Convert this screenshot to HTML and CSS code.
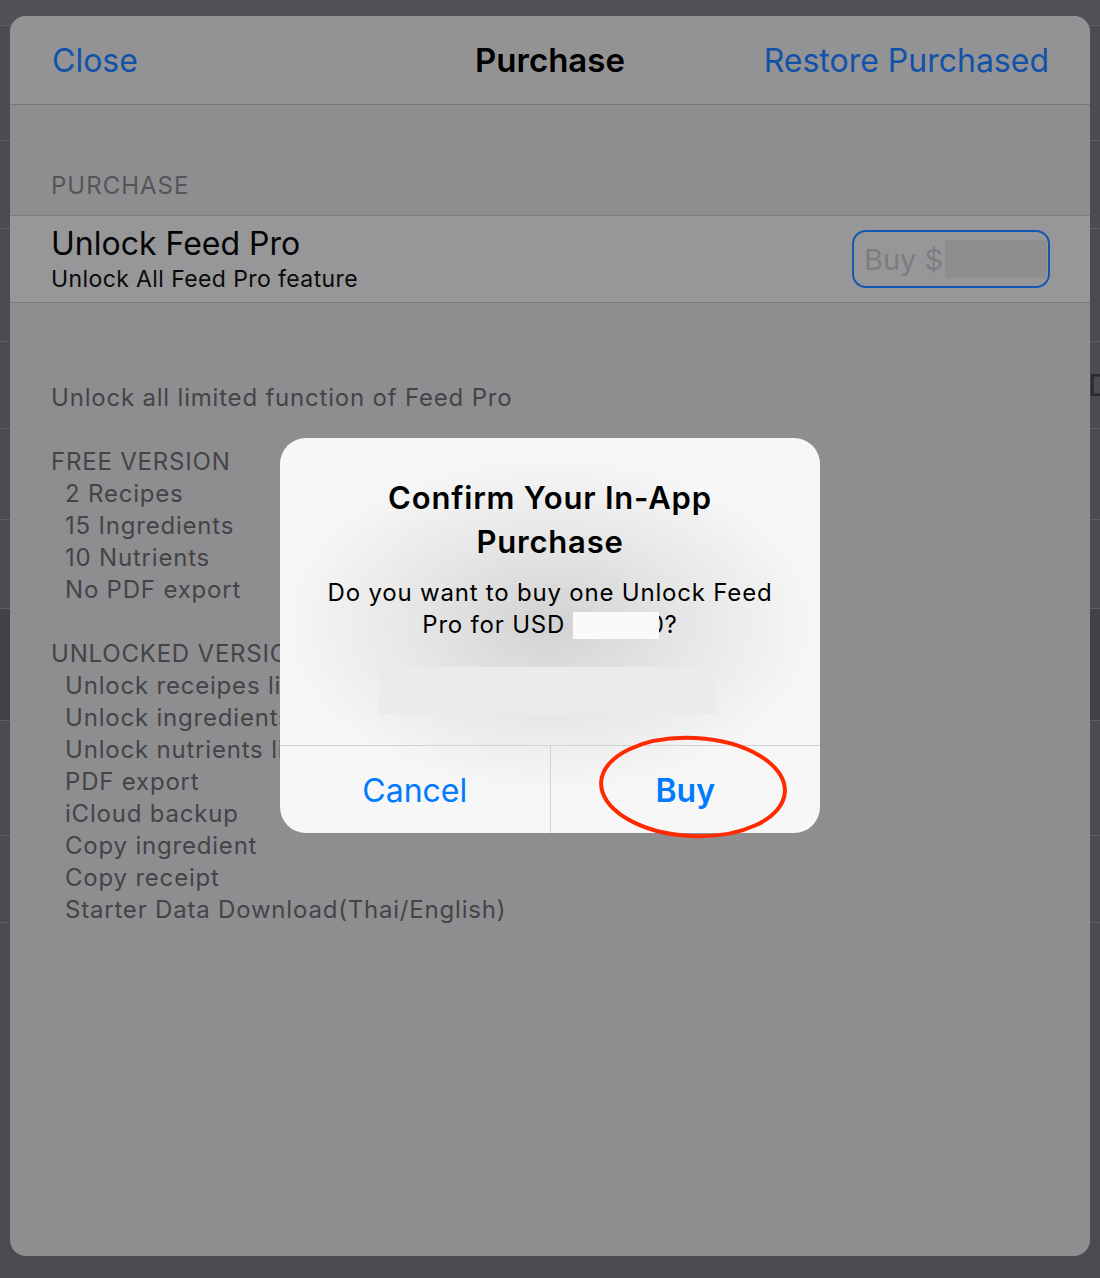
FILE: index.html
```html
<!DOCTYPE html>
<html lang="en">
<head>
    <meta charset="UTF-8">
    <meta name="viewport" content="width=device-width, initial-scale=1.0">
    <title>Purchase</title>
    <link rel="stylesheet" href="styles.css">
</head>
<body>
    <!-- list behind the sheet, only its edges show -->
    <div class="behind">
        <div class="brow nav"></div>
        <div class="brow" style="height:114px"></div>
        <div class="brow" style="height:87px"></div>
        <div class="brow" style="height:112px"></div>
        <div class="brow" style="height:86px"><span class="peek">D</span></div>
        <div class="brow" style="height:90px"></div>
        <div class="brow" style="height:88px"></div>
        <div class="brow dark" style="height:111px"></div>
        <div class="brow" style="height:114px"></div>
        <div class="brow" style="height:86px"><span class="peek">(</span></div>
    </div>

    <div class="sheet">
        <header class="sheet-head">
            <span class="link">Close</span>
            <span class="title">Purchase</span>
            <span class="link">Restore Purchased</span>
        </header>

        <div class="section-title">PURCHASE</div>
        <div class="cell">
            <div>
                <div class="cell-title">Unlock Feed Pro</div>
                <div class="cell-sub">Unlock All Feed Pro feature</div>
            </div>
            <div class="buy-btn">Buy $<span class="hidden-price"></span></div>
        </div>

        <div class="about">
            <div>Unlock all limited function of Feed Pro</div>
            <div class="blank"></div>
            <div>FREE VERSION</div>
            <div class="item">2 Recipes</div>
            <div class="item">15 Ingredients</div>
            <div class="item">10 Nutrients</div>
            <div class="item">No PDF export</div>
            <div class="blank"></div>
            <div>UNLOCKED VERSION</div>
            <div class="item">Unlock receipes limit</div>
            <div class="item">Unlock ingredients limit</div>
            <div class="item">Unlock nutrients limit</div>
            <div class="item">PDF export</div>
            <div class="item">iCloud backup</div>
            <div class="item">Copy ingredient</div>
            <div class="item">Copy receipt</div>
            <div class="item">Starter Data Download(Thai/English)</div>
        </div>
    </div>

    <div class="alert">
        <div class="alert-body">
            <div class="alert-title">Confirm Your In-App<br>Purchase</div>
            <div class="alert-msg">Do you want to buy one Unlock Feed<br>Pro for USD <span class="mask"></span>0?</div>
            <div class="alert-box"></div>
        </div>
        <div class="alert-actions">
            <div class="action">Cancel</div>
            <div class="action bold">Buy</div>
        </div>
        <svg class="circle" width="200" height="112" viewBox="0 0 200 112">
            <ellipse cx="100" cy="56" rx="92" ry="49" transform="rotate(3 100 56)" fill="none" stroke="#ff2a00" stroke-width="4"/>
        </svg>
    </div>
</body>
</html>
```

FILE: styles.css
```css
body {
    margin: 0;
    width: 1100px;
    height: 1278px;
    background-color: #4a4b4f;
    font-family: 'Inter', 'Roboto', sans-serif;
    position: relative;
    overflow: hidden;
}
.behind {
    display: flex;
    flex-direction: column;
}
.brow {
    border-bottom: 1px solid #5e5f63;
    background-color: #4b4c50;
    display: flex;
    justify-content: flex-end;
    align-items: center;
}
.brow.nav {
    height: 25px;
    background-color: #505155;
}
.brow.dark {
    background-color: #424346;
}
.peek {
    font-size: 30px;
    color: #2a2a2d;
    margin-right: -10px;
}
.sheet {
    position: absolute;
    top: 16px;
    left: 10px;
    width: 1080px;
    height: 1240px;
    border-radius: 16px;
    background-color: #8e8e91;
    overflow: hidden;
}
.sheet-head {
    height: 88px;
    display: flex;
    align-items: center;
    justify-content: space-between;
    padding: 0 41px 0 42px;
    background-color: #939395;
    border-bottom: 1px solid #77777a;
    position: relative;
}
.link {
    font-size: 32px;
    color: #1152a8;
}
.title {
    position: absolute;
    left: 0;
    right: 0;
    text-align: center;
    font-size: 33px;
    font-weight: 600;
    color: #000;
}
.section-title {
    padding: 65px 0 0 41px;
    height: 45px;
    font-size: 24px;
    line-height: 32px;
    letter-spacing: 1px;
    color: #555558;
}
.cell {
    height: 86px;
    display: flex;
    align-items: center;
    justify-content: space-between;
    padding: 0 40px 0 41px;
    background-color: #979799;
    border-top: 1px solid #7c7c7f;
    border-bottom: 1px solid #7c7c7f;
}
.cell-title {
    font-size: 32px;
    line-height: 40px;
    color: #050505;
}
.cell-sub {
    font-size: 23px;
    line-height: 30px;
    letter-spacing: 0.4px;
    color: #0a0a0a;
}
.buy-btn {
    width: 184px;
    height: 54px;
    border: 2px solid #1556b0;
    border-radius: 14px;
    display: flex;
    align-items: center;
    padding-left: 10px;
    font-size: 29px;
    color: #7d7d80;
}
.hidden-price {
    width: 102px;
    height: 38px;
    margin-left: 2px;
    background-color: #8e8e90;
}
.about {
    padding: 79px 0 0 41px;
    font-size: 24px;
    line-height: 32px;
    letter-spacing: 0.8px;
    color: #444447;
}
.blank {
    height: 32px;
}
.item {
    padding-left: 14px;
}
.alert {
    position: absolute;
    top: 438px;
    left: 280px;
    width: 540px;
    height: 395px;
    border-radius: 26px;
    background: radial-gradient(ellipse 270px 170px at 50% 47%, #d2d2d2 0%, #e6e6e6 50%, #f7f7f7 100%);
    display: flex;
    flex-direction: column;
}
.alert-body {
    flex: 1;
    display: flex;
    flex-direction: column;
    align-items: center;
    padding-top: 38px;
    text-align: center;
}
.alert-title {
    font-size: 31px;
    line-height: 44px;
    letter-spacing: 0.8px;
    font-weight: 600;
    color: #000;
}
.alert-msg {
    margin-top: 13px;
    font-size: 24px;
    line-height: 32px;
    letter-spacing: 0.8px;
    color: #000;
}
.mask {
    display: inline-block;
    position: relative;
    z-index: 1;
    width: 86px;
    height: 27px;
    margin-right: -10px;
    vertical-align: -6px;
    background-color: #fafafa;
}
.alert-box {
    margin-top: 26px;
    margin-left: -6px;
    width: 336px;
    height: 47px;
    background-color: #ebebeb;
}
.alert-actions {
    height: 87px;
    display: flex;
    border-top: 1px solid #d3d3d6;
}
.action {
    flex: 1;
    display: flex;
    align-items: center;
    justify-content: center;
    padding-top: 2px;
    font-size: 32px;
    color: #007aff;
}
.action + .action {
    border-left: 1px solid #d3d3d6;
}
.action.bold {
    font-weight: 600;
}
.circle {
    position: absolute;
    left: 313px;
    top: 293px;
}
```
